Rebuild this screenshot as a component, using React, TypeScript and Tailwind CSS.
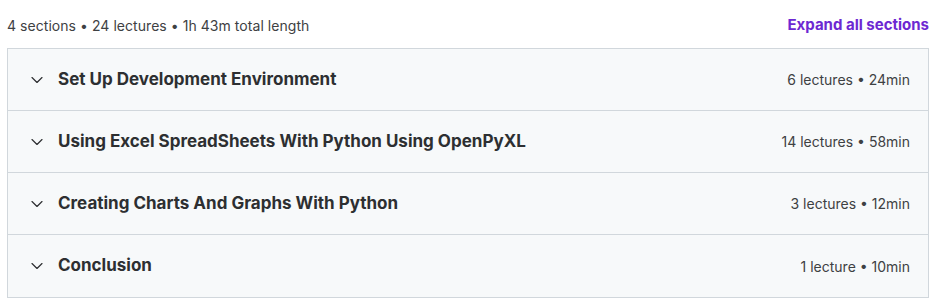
import { ChevronDown } from "lucide-react";

const sections = [
    { title: "Set Up Development Environment", meta: "6 lectures • 24min" },
    { title: "Using Excel SpreadSheets With Python Using OpenPyXL", meta: "14 lectures • 58min" },
    { title: "Creating Charts And Graphs With Python", meta: "3 lectures • 12min" },
    { title: "Conclusion", meta: "1 lecture • 10min" },
];

export default function App() {
    return (
        <div className="w-[938px] h-[306px] bg-white pl-[7px] pr-[9px] font-['Inter',sans-serif] text-[#2d2f31]">
            {/* summary line */}
            <div className="flex items-center justify-between h-[48px] pt-[2px]">
                <span className="text-[14px] tracking-[0.05px] text-[#3e4143]">4 sections • 24 lectures • 1h 43m total length</span>
                <button className="text-[15px] font-bold text-[#6d28d2]">Expand all sections</button>
            </div>

            {/* accordion */}
            <div className="border border-[#d1d7dc]">
                {sections.map((s, i) => (
                    <div
                        key={i}
                        className={`flex items-center justify-between h-[62px] bg-[#f7f9fa] pl-[19px] pr-[18px] ${i < sections.length - 1 ? "border-b border-[#d1d7dc]" : ""}`}
                    >
                        <div className="flex items-center gap-[11px]">
                            <ChevronDown size={20} strokeWidth={1.4} className="text-[#2d2f31]" />
                            <span className="text-[17px] font-bold">{s.title}</span>
                        </div>
                        <span className="text-[14px] text-[#3e4143]">{s.meta}</span>
                    </div>
                ))}
            </div>
        </div>
    );
}
